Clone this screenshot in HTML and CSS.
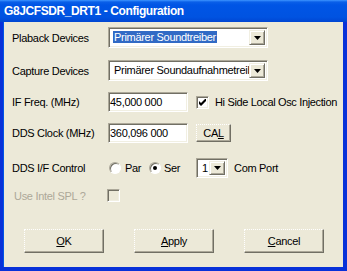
FILE: index.html
```html
<!DOCTYPE html>
<html lang="en">
<head>
    <meta charset="UTF-8">
    <title>G8JCFSDR_DRT1 - Configuration</title>
    <link rel="stylesheet" href="styles.css">
</head>
<body>

    <!-- Configuration dialog -->
    <div class="window">
        <div class="titlebar">G8JCFSDR_DRT1 - Configuration</div>

        <div class="client">
            <div class="row row-play">
                <span class="label">Plaback Devices</span>
                <div class="combo combo-dev">
                    <div class="combo-text"><span class="selected">Primärer Soundtreiber</span></div>
                    <div class="combo-btn">
                        <svg width="7" height="4" viewBox="0 0 7 4"><path d="M0 0h7L3.5 4z" fill="#000"/></svg>
                    </div>
                </div>
            </div>

            <div class="row row-capture">
                <span class="label">Capture Devices</span>
                <div class="combo combo-dev">
                    <div class="combo-text plain">Primärer Soundaufnahmetreiber</div>
                    <div class="combo-btn">
                        <svg width="7" height="4" viewBox="0 0 7 4"><path d="M0 0h7L3.5 4z" fill="#000"/></svg>
                    </div>
                </div>
            </div>

            <div class="row row-if">
                <span class="label">IF Freq. (MHz)</span>
                <div class="edit">45,000 000</div>
                <span class="check">
                    <svg width="7" height="7" viewBox="0 0 7 7"><path d="M0 2v3l2 2 5-5v-3l-5 5z" fill="#000"/></svg>
                </span>
                <span class="check-label">Hi Side Local Osc Injection</span>
            </div>

            <div class="row row-clock">
                <span class="label">DDS Clock (MHz)</span>
                <div class="edit">360,096 000</div>
                <button class="btn btn-cal">CA<u>L</u></button>
            </div>

            <div class="row row-control">
                <span class="label">DDS I/F Control</span>
                <span class="radio"></span>
                <span class="radio-label label-par">Par</span>
                <span class="radio on"></span>
                <span class="radio-label label-ser">Ser</span>
                <div class="combo combo-port">
                    <div class="combo-text plain">1</div>
                    <div class="combo-btn">
                        <svg width="7" height="4" viewBox="0 0 7 4"><path d="M0 0h7L3.5 4z" fill="#000"/></svg>
                    </div>
                </div>
                <span class="port-label">Com Port</span>
            </div>

            <div class="row row-spl">
                <span class="label label-spl">Use Intel SPL ?</span>
                <span class="check check-off"></span>
            </div>

            <div class="buttons">
                <button class="btn btn-main"><u>O</u>K</button>
                <button class="btn btn-main"><u>A</u>pply</button>
                <button class="btn btn-main"><u>C</u>ancel</button>
            </div>
        </div>
    </div>

</body>
</html>
```

FILE: styles.css
```css
body {
    margin: 0;
    font-family: "Liberation Sans", Arial, sans-serif;
    font-size: 11px;
    letter-spacing: -0.3px;
    color: #000;
    background: #ece9d8;
}
.window {
    width: 347px;
    height: 271px;
    display: flex;
    flex-direction: column;
    background: #0831d9;
}
.titlebar {
    height: 22px;
    line-height: 23px;
    padding-left: 4px;
    color: #fff;
    font-weight: bold;
    font-size: 12px;
    letter-spacing: -0.4px;
    background: linear-gradient(#3d95ff 0, #0a5fe8 2px, #0055e5 5px, #0053e1 17px, #0046d2 22px);
}
.client {
    flex: 1;
    margin: 0 4px 4px 3px;
    padding: 5px 0 0 8px;
    background: #ece9d8;
    border-left: 1px solid #0055e5;
}
.row {
    display: flex;
    align-items: center;
    white-space: nowrap;
}
.label {
    box-sizing: border-box;
    flex: 0 0 96px;
}
.label-spl {
    padding-left: 2px;
    flex-basis: 95px;
    color: #aca899;
}
.row-play { height: 21px; }
.row-capture { height: 21px; margin-top: 12px; }
.row-if { height: 20px; margin-top: 11px; }
.row-clock { height: 20px; margin-top: 11px; }
.row-control { height: 21px; margin-top: 14px; }
.row-spl { height: 13px; margin-top: 11px; }

/* sunken controls */
.combo, .edit, .check {
    box-sizing: border-box;
    flex-shrink: 0;
    border: 1px solid;
    border-color: #aca899 #fff #fff #aca899;
    box-shadow: inset 1px 1px #716f64, inset -1px -1px #f1efe2;
    background: #fff;
}
.combo {
    display: flex;
    padding: 2px;
    height: 21px;
}
.combo-dev { width: 160px; }
.combo-port { width: 32px; height: 20px; }
.combo-text {
    flex: 1;
    overflow: hidden;
    padding-left: 2px;
    line-height: 15px;
}
.combo-text.plain { padding-left: 3px; }
.selected {
    background: #316ac5;
    color: #fff;
    padding: 0 1px;
}
.combo-btn {
    box-sizing: border-box;
    width: 16px;
    display: flex;
    align-items: center;
    justify-content: center;
    background: #ece9d8;
    border: 1px solid;
    border-color: #f1efe2 #716f64 #716f64 #f1efe2;
    box-shadow: inset 1px 1px #fff, inset -1px -1px #aca899;
}
.edit {
    width: 80px;
    height: 20px;
    padding: 2px 1px;
    line-height: 14px;
}
.check {
    width: 13px;
    height: 13px;
    display: flex;
    align-items: center;
    justify-content: center;
}
.row-if .check { margin-left: 8px; }
.check-off { background: #ece9d8; }
.check-label { margin-left: 6px; letter-spacing: -0.35px; }
.radio {
    box-sizing: border-box;
    flex-shrink: 0;
    width: 12px;
    height: 12px;
    border-radius: 50%;
    border: 1px solid;
    border-color: #aca899 #fff #fff #aca899;
    box-shadow: inset 1px 1px #716f64;
    background: #fff;
    display: flex;
    align-items: center;
    justify-content: center;
    margin-left: 1px;
}
.radio.on { margin-left: 0; }
.radio.on::after {
    content: "";
    width: 4px;
    height: 4px;
    border-radius: 50%;
    background: #000;
}
.radio-label { margin-left: 4px; }
.label-par { width: 24px; }
.label-ser { width: 32px; margin-left: 3px; }
.port-label { margin-left: 6px; }

/* raised buttons */
.btn {
    box-sizing: border-box;
    flex-shrink: 0;
    font-family: inherit;
    font-size: 11px;
    letter-spacing: -0.3px;
    color: #000;
    padding: 0;
    background: #ece9d8;
    border: 1px solid;
    border-style: dotted solid solid dotted;
    border-color: #fff #716f64 #716f64 #fff;
    box-shadow: inset -1px -1px #aca899;
}
.btn-cal {
    width: 35px;
    height: 18px;
    margin-left: 8px;
}
.buttons {
    display: flex;
    gap: 30px;
    margin: 27px 0 0 12px;
}
.btn-main {
    width: 80px;
    height: 24px;
}
```
